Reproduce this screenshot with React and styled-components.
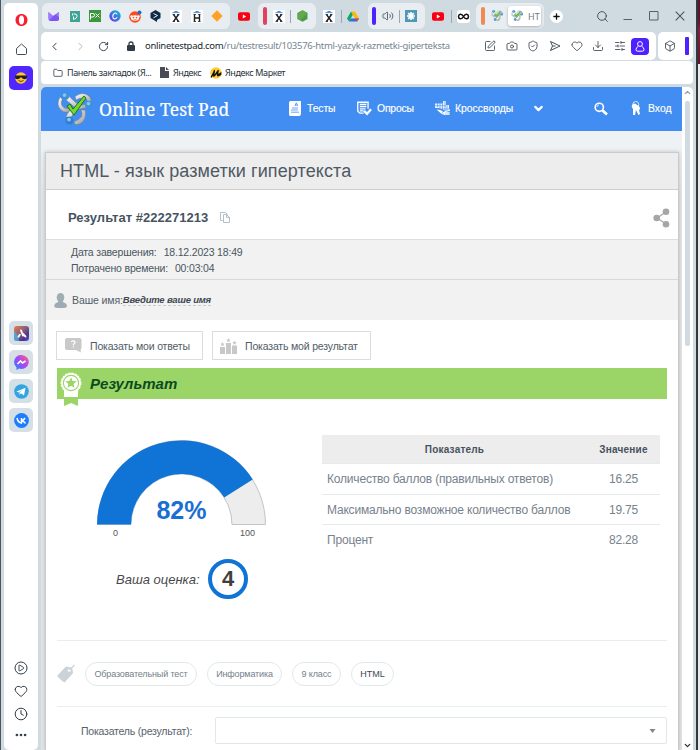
import React from "react";
import styled, { createGlobalStyle } from "styled-components";
import {
  ChevronLeft, ChevronRight, ChevronDown, ChevronUp, RotateCw, Search, SquarePen, Camera,
  ShieldCheck, SendHorizontal, Heart, Download, SlidersHorizontal, Box, Folder, Clock,
  Ellipsis, Volume2, Plus,
} from "lucide-react";

const Global = createGlobalStyle`
  *{box-sizing:border-box}
  body{margin:0;overflow:hidden;background:#cfdae1}
  svg{display:block;flex:none}
`;

const Window = styled.div`
  width:700px;height:750px;display:grid;grid-template-columns:41px 652px 5px 2px;overflow:hidden;
  background:#cfdae1;font-family:"Liberation Sans",Arial,sans-serif;color:#4b5660;
`;
const LeftEdge = styled.div`
  display:flex;height:750px;padding:3px 0 0 3px;border-left:1px solid #50555a;
`;
const Sidebar = styled.aside`
  width:34px;height:747px;background:#fff;border-radius:5px;display:flex;flex-direction:column;align-items:center;
  color:#313c46;
`;
const SideItem = styled.div`
  width:24px;height:24px;margin-top:${p => p.$top || 0}px;border-radius:5px;flex:none;
  display:flex;align-items:center;justify-content:center;background:${p => p.$bg || "transparent"};
`;
const Main = styled.div`height:750px;display:flex;flex-direction:column;min-width:0;`;
const RightFrame = styled.div`border-right:2px solid #33383d;height:750px;`;
const Backdrop = styled.div`height:750px;background:linear-gradient(#5b1428 0 20px,#85213d 30px,#5b1830 64px,#e8e8e8 64px);`;

const TabBar = styled.div`height:32px;display:flex;align-items:flex-start;padding:3px 0 0 1px;flex:none;`;
const TabGroup = styled.div`
  height:26px;width:${p => p.$w}px;padding-left:${p => p.$pl || 0}px;
  border-radius:6px;background:#e7edf1;display:flex;align-items:center;flex:none;
`;
const Tab = styled.div`
  width:${p => p.$w || 20.35}px;height:26px;display:flex;align-items:center;justify-content:center;flex:none;color:#3f4b55;
`;
const TabMark = styled.i`width:4px;height:18px;border-radius:2px;background:${p => p.$c};flex:none;`;
const TabRule = styled.i`width:1px;height:13px;background:#9ba7af;flex:none;`;
const LooseTabs = styled.div`width:${p => p.$w}px;height:26px;display:flex;align-items:center;flex:none;`;
const ActiveTab = styled.div`
  width:33px;height:20px;background:#fff;border-radius:3px;box-shadow:0 1px 3px #0004;display:flex;align-items:center;
  padding-left:3px;gap:5px;font:9px "Noto Sans",sans-serif;color:#70787e;overflow:hidden;white-space:nowrap;flex:none;
`;
const NewTab = styled.div`width:13px;height:13px;border-radius:50%;background:#fff;color:#111;display:flex;align-items:center;justify-content:center;`;
const WindowControls = styled.div`display:flex;margin-left:21px;`;

const AddressRow = styled.div`height:28px;display:flex;gap:2px;flex:none;`;
const AddressBar = styled.div`
  width:615px;background:#fff;border-radius:5px;display:flex;align-items:center;padding:0 7px 0 6px;color:#303b45;
`;
const NavCluster = styled.div`display:flex;align-items:center;`;
const NavIcon = styled.div`width:${p => p.$w}px;margin-left:${p => p.$ml || 0}px;display:flex;justify-content:center;opacity:${p => p.$dim ? 0.35 : 1};`;
const Url = styled.div`font:9.5px/14px "Noto Sans",sans-serif;letter-spacing:-.29px;color:#20282f;white-space:nowrap;padding-left:5px;
  span{color:#74848f}`;
const Actions = styled.div`display:flex;align-items:center;margin-left:auto;`;
const Account = styled.div`width:18px;height:17px;border-radius:4px;background:#4d22ff;color:#fff;display:flex;align-items:center;justify-content:center;`;
const PanelBar = styled.div`width:35px;background:#fff;border-radius:5px;display:flex;align-items:center;justify-content:space-between;padding:0 4px 0 6px;color:#303b45;`;
const PanelMark = styled.i`width:4px;height:18px;background:#4d22ff;border-radius:1px;`;
const Bookmarks = styled.div`
  height:23px;margin-top:1px;background:#fff;border-radius:4px;display:flex;align-items:center;padding-left:12px;flex:none;
  font:9px "Noto Sans",sans-serif;color:#27313a;
`;
const Bookmark = styled.div`display:flex;align-items:center;gap:${p => p.$gap || 4}px;width:${p => p.$w}px;white-space:nowrap;letter-spacing:-.4px;`;

const Viewport = styled.div`margin-top:3px;height:663px;display:flex;border-radius:5px 5px 0 0;overflow:hidden;flex:none;`;
const Page = styled.div`width:641px;background:linear-gradient(#eef2f4 60px,#e3e5e7 110px);display:flex;flex-direction:column;`;
const Scroller = styled.div`width:11px;background:#fff;display:flex;flex-direction:column;align-items:center;color:#9a9fa3;padding:1px 0 0;justify-content:space-between;`;
const ScrollTop = styled.div`display:flex;flex-direction:column;align-items:center;gap:4px;`;
const Thumb = styled.div`width:5px;height:245px;background:#cfdae2;border-radius:2px;`;

const SiteHeader = styled.header`
  height:43.500px;flex:none;background:#418df2;color:#fff;display:flex;align-items:center;font-size:10.4px;
`;
const Brand = styled.div`
  width:248px;display:flex;align-items:center;gap:6px;padding-left:16px;font:17.5px "Noto Serif","Liberation Serif",serif;white-space:nowrap;
  span{-webkit-text-stroke:.2px #fff;letter-spacing:.06px}
`;
const MenuItem = styled.div`display:flex;align-items:center;gap:${p => p.$gap || 5}px;width:${p => p.$w}px;white-space:nowrap;letter-spacing:${p => p.$ls || 0}px;-webkit-text-stroke:.15px #fff;`;

const Card = styled.main`
  width:634px;margin:21.500px 0 0 4px;border:1px solid #c8cacb;border-bottom:0;background:#fff;flex:1;box-shadow:0 0 4px #0003;
`;
const CardTitle = styled.h1`
  margin:0;height:37px;background:#ededed;border-bottom:1px solid #cfcfcf;padding-left:14px;font-weight:400;font-size:18px;
  line-height:37px;color:#4e5963;letter-spacing:.09px;white-space:nowrap;
`;
const ResultHead = styled.div`height:49px;display:flex;align-items:center;justify-content:space-between;padding:6px 8px 0 22px;font-weight:700;font-size:13px;color:#46545f;`;
const ResultId = styled.div`display:flex;gap:12px;align-items:center;letter-spacing:.02px;`;
const Meta = styled.div`
  height:41px;background:#f2f2f2;border-top:1px solid #dedede;border-bottom:1px solid #d9d9d9;padding:4px 0 0 25px;
  font-size:10.5px;line-height:16px;color:#4a5660;
`;
const MetaRow = styled.div`display:flex;gap:7px;white-space:nowrap;letter-spacing:-.18px;`;
const NameRow = styled.div`
  height:40px;background:#f2f2f2;display:flex;align-items:center;padding-left:8px;font-size:10.5px;color:#505d69;letter-spacing:-.1px;
  svg{margin-right:5px}
`;
const NameLink = styled.b`font-style:italic;font-size:9.5px;border-bottom:1px dashed #ccc;color:#3e4851;line-height:11px;letter-spacing:-.2px;`;
const Body = styled.div`padding:11px 11px 0;`;
const Buttons = styled.div`display:flex;gap:9px;margin-left:-1px;`;
const Button = styled.div`
  width:${p => p.$w}px;height:29px;border:1px solid #dcdcdc;display:flex;align-items:center;gap:${p => p.$gap}px;padding-left:${p => p.$pl}px;font-size:10.5px;
  color:#505c66;white-space:nowrap;letter-spacing:-.17px;
`;
const Banner = styled.div`
  height:31px;margin-top:8px;background:#9bd467;padding-left:3px;display:flex;gap:8px;font:italic 700 15px/31px "Liberation Sans",sans-serif;color:#0b4c20;
  svg{margin-top:4px} span{letter-spacing:.12px}
`;
const Summary = styled.div`height:242px;display:flex;border-bottom:1px solid #e8eded;`;
const ScoreColumn = styled.div`width:265px;padding:41px 0 0 39px;`;
const GaugeText = styled.text`
  font-family:"Liberation Sans",sans-serif;font-size:${p => p.$size}px;font-weight:${p => p.$bold ? 700 : 400};fill:${p => p.$c};text-anchor:middle;
`;
const Grade = styled.div`display:flex;align-items:center;gap:7px;padding-left:20px;margin-top:18px;font-style:italic;font-size:13px;color:#47494b;
  span{white-space:nowrap;width:85px}`;
const GradeBadge = styled.b`width:40px;height:40px;border:4px solid #1074d6;border-radius:50%;display:flex;align-items:center;justify-content:center;font-style:normal;font-size:22px;color:#3f3f3f;`;
const Table = styled.div`width:338px;margin-top:36px;`;
const TableRow = styled.div`
  display:grid;grid-template-columns:265px 73px;align-items:center;height:${p => p.$h}px;
  border-bottom:${p => p.$last ? 0 : "1px solid #e6eaea"};background:${p => p.$head ? "#ededed" : "#fff"};
  font-size:${p => p.$head ? 10 : 12}px;font-weight:${p => p.$head ? 700 : 400};color:${p => p.$head ? "#46525d" : "#77828d"};
  letter-spacing:${p => p.$head ? ".2px" : "-.19px"};
`;
const Cell = styled.div`padding-left:${p => p.$center ? 0 : 5}px;text-align:${p => p.$center ? "center" : "left"};white-space:nowrap;`;
const Tags = styled.div`height:66px;border-bottom:1px solid #e8eded;display:flex;align-items:center;gap:10px;`;
const Tag = styled.div`
  width:${p => p.$w}px;height:24px;border:1px solid #e0eaea;border-radius:12px;display:flex;align-items:center;justify-content:center;
  font-size:9px;color:${p => p.$dark ? "#3e4851" : "#74808a"};white-space:nowrap;letter-spacing:${p => p.$dark ? 0 : -.14}px;
`;
const Filter = styled.div`display:flex;align-items:center;padding:10px 0 0 24px;font-size:10.5px;color:#56626c;
  span{width:134px;white-space:nowrap;letter-spacing:-.21px}`;
const Select = styled.div`width:453px;height:27px;border:1px solid #e1e8ea;border-radius:2px;display:flex;align-items:center;justify-content:flex-end;padding-right:10px;`;

const Minimize = () => <svg width="10" height="12" viewBox="0 0 10 12"><path d="M.5 9.500h8.500" stroke="#56616a" /></svg>;
const Maximize = () => <svg width="10" height="10" viewBox="0 0 10 10"><path d="M.5 .5h8.500v8.500H.5z" fill="none" stroke="#56616a" /></svg>;
const Close = () => <svg width="10" height="10" viewBox="0 0 10 10"><path d="M.7.7l8.600 8.600m0-8.600L.7 9.300" fill="none" stroke="#4a555e" strokeWidth="1.100" /></svg>;
const Opera = () => <svg width="13" height="14" viewBox="0 0 13 14"><path fillRule="evenodd" fill="#ff1b2d" d="M6.5 1C2.900 1 .5 3.600.5 7s2.400 6 6 6 6-2.600 6-6-2.400-6-6-6zm0 1.500c1.700 0 2.600 2 2.600 4.500s-.9 4.500-2.600 4.500S3.900 9.500 3.900 7s.9-4.500 2.600-4.500z" /></svg>;
const Home = () => <svg width="13" height="13" viewBox="0 0 13 13"><path d="M1.500 5.500L6.500 1l5 4.500v5q0 1-1 1h-8q-1 0-1-1z" fill="none" stroke="#434e58" strokeWidth="1" strokeLinejoin="round" /></svg>;
const PlayRing = () => <svg width="14" height="14" viewBox="0 0 14 14"><circle cx="7" cy="7" r="6" fill="none" stroke="#313c46" /><path d="M5 4.700q0-.9.900-.5L9.500 6.400q.7.600 0 1.200L5.900 9.800Q5 10.200 5 9.300z" fill="none" stroke="#313c46" strokeWidth=".9" /></svg>;
const Profile = () => <svg width="12" height="13" viewBox="0 0 12 13"><circle cx="6" cy="4" r="2.400" fill="none" stroke="#fff" /><path d="M4.300 6.200Q2 7.500 2 9.700q0 1.500 1.500 1.500h5q1.500 0 1.500-1.500 0-2.200-2.300-3.500" fill="none" stroke="#fff" /></svg>;
const Cool = () => <svg width="14" height="14" viewBox="0 0 14 14"><circle cx="7" cy="7" r="5.800" fill="#ffc72c" /><path d="M1 4.500h12v2c0 2-4.300 2.500-5.300 0H6.300C5.300 9 1 8.500 1 6.500z" fill="#1e1d2b" /><path d="M4.500 9.500q2.500 2 5 0" stroke="#6b3d00" fill="none" /></svg>;
const Mask = () => <svg width="12" height="11" viewBox="0 0 12 11"><path d="M.5 1l4.500 4L11 1v8q-1 1-2 1H2.500Q.5 10 .5 8z" fill="#7b56f0" /><path d="M.5 1L5 5l-3 4-1.500-2zM11 1v5L8 4z" fill="#a079ff" /></svg>;
const Teal = () => <svg width="10" height="11" viewBox="0 0 10 11"><path d="M0 0h10v11H0z" fill="#3fa592" /><path d="M3.500 3h1.500q2.500.3 2 2.500T4.500 8H3.500M2.500 2.500v2M3.500 5.500V8.500" stroke="#fff" fill="none" /></svg>;
const Px = () => <svg width="12" height="12" viewBox="0 0 12 12"><path d="M0 0h12v12H0z" fill="#3b963e" /><path d="M1.500 9.500V3.500H4q1.500 0 1.500 1.700T4 7H2M6.500 3.500l4 4m0-4l-4 4" stroke="#fff" fill="none" /></svg>;
const Canva = () => <svg width="12" height="12" viewBox="0 0 12 12"><defs><linearGradient id="cv" x1="0" x2="1" y1="1" y2="0"><stop stopColor="#6a2ee8" /><stop offset=".5" stopColor="#3b78e8" /><stop offset="1" stopColor="#00c4cc" /></linearGradient></defs><circle cx="6" cy="6" r="5.700" fill="url(#cv)" /><path d="M8 4.300Q7.700 2.800 6.300 3 4 3.500 3.800 6.300 3.900 9 5.900 8.900 7.300 8.700 8.200 7.300" fill="none" stroke="#fff" strokeWidth="1.100" /></svg>;
const Reddit = () => <svg width="13" height="13" viewBox="0 0 13 13"><circle cx="6" cy="7" r="5.800" fill="#ff4a1c" /><ellipse cx="6" cy="8" rx="4" ry="2.800" fill="#fff" /><circle cx="2.500" cy="6.500" r="1.200" fill="#fff" /><circle cx="9.500" cy="6.500" r="1.200" fill="#fff" /><circle cx="4.500" cy="7.600" r=".8" fill="#ff4a1c" /><circle cx="7.500" cy="7.600" r=".8" fill="#ff4a1c" /><path d="M4.500 9.400q1.500.9 3 0" stroke="#d33" strokeWidth=".6" fill="none" /><circle cx="10.500" cy="2.500" r="2" fill="#1b6fc4" /></svg>;
const DeepL = () => <svg width="11" height="12" viewBox="0 0 11 12"><path d="M5.500 0L10.500 3v5L7 10v2l-2-1.200L.5 8V3z" fill="#0f2b46" /><path d="M3.500 3.500l4 2-4 2.300" stroke="#fff" fill="none" strokeWidth=".9" /></svg>;
const Crest = ({ h }) => <svg width="12" height="13" viewBox="0 0 12 13"><path d="M0 0h12v13H0z" fill="#fff" /><path d="M3.500 2.300Q6-.5 8.500 2.300z" fill="#2f83e4" /><path d="M2.500 2.600h7" stroke="#317bd2" strokeWidth=".8" />{h ? <path d="M3.500 4.500v7m5-7v7M3.500 8h5" stroke="#222" strokeWidth="1.400" fill="none" /> : <path d="M3.500 4.500l5 7m0-7l-5 7" stroke="#222" strokeWidth="1.400" fill="none" />}<path d="M2.500 4.500H5m2 0h2.500m-7 7H5m2 0h2.500" stroke="#222" strokeWidth=".8" /></svg>;
const Diamond = () => <svg width="12" height="12" viewBox="0 0 12 12"><path d="M6 .3L11.700 6 6 11.700.3 6z" fill="#ffa226" /></svg>;
const Tube = () => <svg width="12" height="9" viewBox="0 0 12 9"><rect width="12" height="8.500" y=".2" rx="2" fill="#f80012" /><path d="M4.800 2.500v4L8.200 4.500z" fill="#fff" /></svg>;
const Node = () => <svg width="11" height="12" viewBox="0 0 11 12"><path d="M5.500.3l5 2.800v5.800l-5 2.800-5-2.800V3.100z" fill="#4b9a48" /><path d="M5.500.3l5 2.800L3 10.300.5 8.900V3.100z" fill="#62a94e" /></svg>;
const Drive = () => <svg width="12" height="11" viewBox="0 0 12 11"><path d="M4 .5L0 7.500l2 3 4-7z" fill="#0da960" /><path d="M4 .5h4l4 7H8z" fill="#ffba00" /><path d="M2 10.500h8l2-3H3.800z" fill="#2d6fdd" /><path d="M8 7.500h4l-2 3z" fill="#e94235" /></svg>;
const Burst = () => <svg width="12" height="12" viewBox="0 0 12 12"><path d="M0 0h12v12H0z" fill="#4f99b5" /><path d="M6 2v8M2 6h8M3.200 3.200l5.600 5.600M8.800 3.200L3.200 8.800" stroke="#fff" strokeWidth="1.700" /></svg>;
const Loop = () => <svg width="13" height="13" viewBox="0 0 13 13"><rect width="13" height="13" rx="3" fill="#fff" /><path d="M6.500 6.500C4.500 3 1.500 4 1.500 6.500s3 3.500 5 0 5-2.500 5 0-3 3.500-5 0z" stroke="#111" strokeWidth="1.500" fill="none" /></svg>;
const Logo = ({ s = 12 }) => (
  <svg width={s} height={s * .92} viewBox="0 0 36 33">
    <defs><linearGradient id="metal" x1="0" x2="1" y1="0" y2="1"><stop stopColor="#fff" /><stop offset="1" stopColor="#9aa0a5" /></linearGradient></defs>
    <g fill="url(#metal)" stroke="#737c83" strokeWidth=".5">
      <path d="M3 5Q-1.500 13 4 18q5 4 9 1l-1-2.500q-5 .5-7-3Q3.500 10 5.500 7z" /><path d="M18 4.500Q26-1.500 32 4q3 3 2 7l-3-1q-1-4-5-4-4 0-7 2z" /><path d="M24 18q4 8-7 11.500l1 3q4 .5 7-2 5-5 3-12.500zM9 25q2-6 7-9l3 4q-4 2-5 6z" /><path d="M10 2.500l11 10-3 3L8 7zM31 12l-13 2 1 4 13-3z" />
    </g>
    <circle cx="8" cy="4" r="4" fill="#3d91d9" /><circle cx="32" cy="12.500" r="3.900" fill="#3d91d9" /><circle cx="12.500" cy="28.500" r="4" fill="#2f80c9" />
    <circle cx="7.500" cy="3" r="1.900" fill="#85c5f0" /><circle cx="31.500" cy="11.500" r="1.900" fill="#85c5f0" /><circle cx="12" cy="27.500" r="1.900" fill="#85c5f0" />
    <path d="M10 14l3-2 3 5 11-13 2 2-12 17z" fill="#70dc29" stroke="#286c16" strokeWidth="1" />
  </svg>
);
const Paper = () => <svg width="9" height="11" viewBox="0 0 9 11"><path d="M0 0h5v4h4v7H0z" fill="#474d52" /><path d="M6 0l3 3H6z" fill="#474d52" /></svg>;
const Market = () => <svg width="12" height="12" viewBox="0 0 12 12"><circle cx="6" cy="6" r="5.800" fill="#fc3" /><path d="M.5 10Q2 8 4 3q1-1 1 1L4.500 7.500 7.800 3q1-1 1 .7L8.300 7l3-2v3L8 9.500Q6.500 9.500 7 7L4.500 9.500q-1.500 1-1.500-1L1.500 11z" fill="#111" /></svg>;
const LockFill = () => <svg width="8" height="10" viewBox="0 0 8 10"><path d="M2 5V3q0-2 2-2t2 2v2" stroke="#303b45" strokeWidth="1.300" fill="none" /><rect y="4" width="8" height="6" rx="1" fill="#303b45" /></svg>;
const Edit = SquarePen;
const Plane = () => <svg width="12" height="12" viewBox="0 0 12 12"><path d="M1.500 1.500L11 6l-9.500 4.500L3.500 6zM3.500 6h3" fill="none" stroke="#303b45" strokeWidth=".9" strokeLinejoin="round" /></svg>;
const TestIcon = () => <svg width="12" height="15" viewBox="0 0 12 15"><path d="M1.500 0H12v12.500q0 2.500-2 2.500H1q-1 0-1-2V2Q0 0 1.500 0z" fill="#fff" /><path d="M5.800 5L7.300 1.800 8.800 5M6.300 4h2M3 7h6M2 9h7M2 11.200h8" stroke="#418df2" strokeWidth=".8" fill="none" /></svg>;
const PollIcon = () => <svg width="15" height="15" viewBox="0 0 16 15"><path d="M7 12.500H3L.8 10.500V.8h11v7M3 3.200h7M3 5.500h7M3 7.800h6M3 10h4" stroke="#fff" strokeWidth="1.400" fill="none" /><path d="M7.500 10l3.200 3.200L15 8.300" stroke="#fff" strokeWidth="2.400" fill="none" /></svg>;
const CrossIcon = () => <svg width="15" height="15" viewBox="0 0 15 15"><path d="M0 2.500h8V0h3v4h3v4h1v2h-4L4 7H0z" fill="#e9f3ff" /><path d="M0 4.700h11M2 8h13M2.500 2v4M5 2v8m2.500-8v8M10 0v10m2-6v6" stroke="#418df2" strokeWidth=".6" /><path d="M1.500 8.500l4 3.500 3 2h6v-3l-4-1-2 1-3-2z" fill="#fff" /><path d="M7 11l2 3m2-3v3m2-3v3" stroke="#418df2" strokeWidth=".5" /></svg>;
const Keys = () => <svg width="11" height="15" viewBox="0 0 11 15"><circle cx="4.800" cy="3.500" r="3" stroke="#d7e7ff" fill="none" /><path d="M1 4q3-3 5 0l2 1q2 3 0 4l1 4-1.500 1L5 9l-1 5H2V8Q0 6 1 4z" fill="#fff" /></svg>;
const Find = () => <svg width="14" height="14" viewBox="0 0 14 14"><circle cx="5.300" cy="5.300" r="4.100" stroke="#fff" strokeWidth="1.600" fill="none" /><path d="M8.500 8.500l4.500 4" stroke="#fff" strokeWidth="2.800" /><path d="M3 5Q3.200 3 5 3" stroke="#fff" strokeWidth=".7" fill="none" /></svg>;
const Copy = () => <svg width="10" height="11" viewBox="0 0 10 11"><path d="M2.500 8.500h-2v-8h5l2 2M3.500 2.500h3l3 3v5h-6zM6.500 2.500v3h3" stroke="#a8bac3" strokeWidth=".9" fill="#fff" /></svg>;
const Share = () => <svg width="17" height="20" viewBox="0 0 17 20"><path d="M13 4L4 10l9 6" stroke="#aaa" strokeWidth="1.300" fill="none" /><circle cx="13" cy="3.700" r="3.300" fill="#a6a6a6" /><circle cx="3.700" cy="10" r="3.300" fill="#a6a6a6" /><circle cx="13" cy="16.300" r="3.300" fill="#a6a6a6" /></svg>;
const Person = () => <svg width="13" height="15" viewBox="0 0 13 15"><ellipse cx="6.500" cy="4.500" rx="3.800" ry="4.500" fill="#a0adb5" /><path d="M4.500 8h4q.3 1.500 2.500 2 2 .5 2 3.500-.5 1.500-6.500 1.500T.3 13.500Q0 10.500 2 10q2.300-.5 2.500-2z" fill="#9eabb4" /></svg>;
const Bubble = () => <svg width="17" height="15" viewBox="0 0 17 15"><path d="M2 0h12.500q2 0 2 2v7.500q0 2-1 2L16 14.500l-5-2.500H2q-2 0-2-2V2Q0 0 2 0z" fill="#c9c9c9" /><path d="M6.400 4.200q.4-1.500 2-1.400 2 .2 1.500 2-.4.800-1.500 1.500v1M8.400 8.200v1.400" stroke="#fff" strokeWidth="1.200" fill="none" /></svg>;
const Podium = () => <svg width="17" height="16" viewBox="0 0 17 16"><path d="M0 9h5v7H0zm6-4h5v11H6zm6 2.500h5V16h-5z" fill="#c8c8c8" /><path d="M2.500 4l.7 1.400 1.400.3-1 .9.200 1.500-1.300-.7-1.300.7.200-1.500-1-.9 1.400-.3zM8.500 0l.7 1.400 1.400.3-1 .9.200 1.500-1.300-.7-1.300.7.200-1.500-1-.9 1.400-.3zM14.500 2.500l.7 1.400 1.400.3-1 .9.200 1.500-1.300-.7-1.300.7.200-1.500-1-.9 1.400-.3z" fill="#c8c8c8" /></svg>;
const Medal = () => (
  <svg width="22" height="34" viewBox="0 0 22 34"><path d="M4 27h14v7l-7-3-7 3z" fill="#9bd467" /><path d="M4 18h14v7H4z" fill="#fff" />
    <circle cx="11" cy="11" r="9.500" fill="#fff" stroke="#fff" strokeWidth="1.800" strokeDasharray="2.500 .7" /><circle cx="11" cy="11" r="7.600" stroke="#9bd467" fill="none" strokeWidth="1.100" />
    <path d="M11 5.300l1.600 3.600 4 .4-3 2.600.9 3.900-3.500-2-3.500 2 .9-3.900-3-2.600 4-.4z" fill="#9bd467" /></svg>
);
const TagIcon = () => <svg width="18" height="20" viewBox="0 0 19 20"><path d="M0 12L9.500 2 16 3.500 17 9 8 19l-3-2-2-2z" fill="#cbd3da" /><circle cx="13" cy="6" r="1.600" fill="#fff" /><path d="M13 6l5.500-5.500" stroke="#cbd3da" strokeWidth="1.300" /></svg>;
const Gauge = () => (
  <svg width="171" height="101" viewBox="0 0 171 101">
    <path d="M1.500 84.500A84 84 0 0 1 169.500 84.500H136A50.500 50.500 0 0 0 35 84.500z" fill="#ededed" stroke="#c4c4c4" />
    <path d="M1 84.500A84.500 84.500 0 0 1 156.700 39.500L128.200 57.500A50.500 50.500 0 0 0 35 84.500z" fill="#1074d6" />
    <GaugeText x="85.500" y="78.500" $size="25" $bold $c="#1a6fd2">82%</GaugeText>
    <GaugeText x="19.500" y="96" $size="9" $c="#555">0</GaugeText>
    <GaugeText x="151.500" y="96" $size="9" $c="#555">100</GaugeText>
  </svg>
);
const Aria = () => <svg width="15" height="15" viewBox="0 0 15 15"><defs><linearGradient id="ar" x1="0" y1="0" x2="1" y2="1"><stop stopColor="#f07a4c" /><stop offset=".45" stopColor="#8a6078" /><stop offset=".75" stopColor="#4a3290" /><stop offset="1" stopColor="#5b4bf0" /></linearGradient></defs><rect width="15" height="15" rx="3" fill="url(#ar)" /><path d="M0 5q4 3 5 10H3q-3 0-3-3z" fill="#49b2e7" opacity=".8" /><path d="M4.500 10.800l1.300-2M7 4.500L9 9.500M9 8l2.500 2.500" stroke="#fff" strokeWidth="1.900" fill="none" strokeLinecap="round" /></svg>;
const Messenger = () => <svg width="15" height="15" viewBox="0 0 15 15"><defs><linearGradient id="ms" x1="0" y1="1" x2="1" y2="0"><stop stopColor="#168cff" /><stop offset=".5" stopColor="#a646fa" /><stop offset="1" stopColor="#ff6675" /></linearGradient></defs><path d="M7.500 0a7.300 7 0 1 1-2.500 13.600L2.500 15v-2.800A7 7 0 0 1 7.500 0z" fill="url(#ms)" /><path d="M3.500 9l3-3 2 2 3-2" stroke="#fff" strokeWidth="1.600" fill="none" /></svg>;
const Telegram = () => <svg width="15" height="15" viewBox="0 0 15 15"><circle cx="7.500" cy="7.500" r="7.300" fill="#32a5de" /><path d="M2.500 7.500l9-3.700L10 11.500 7 9.300l-1.500 1.500V8.500L9 5.500l-4.500 3z" fill="#fff" /></svg>;
const Vk = () => <svg width="15" height="15" viewBox="0 0 15 15"><circle cx="7.500" cy="7.500" r="7.400" fill="#1d7cff" /><path d="M3 5q.8 4.500 4.500 5V5m0 3q2-.5 3.500-3m-3 3q2.500.4 3.500 2.500" stroke="#fff" strokeWidth="1.500" fill="none" /></svg>;

const rows = [["Количество баллов (правильных ответов)", "16.25", 31], ["Максимально возможное количество баллов", "19.75", 30], ["Процент", "82.28", 30]];
const actions = [Edit, Camera, ShieldCheck, Plane, Heart, Download, SlidersHorizontal];

export default function App() {
  return (
    <Window>
      <Global />
      <LeftEdge>
        <Sidebar>
          <SideItem $top={5}><Opera /></SideItem>
          <SideItem $top={5}><Home /></SideItem>
          <SideItem $top={5} $bg="#5028ff"><Cool /></SideItem>
          <SideItem $top={231} $bg="#d5e0e6"><Aria /></SideItem>
          <SideItem $top={5} $bg="#d5e0e6"><Messenger /></SideItem>
          <SideItem $top={5} $bg="#d5e0e6"><Telegram /></SideItem>
          <SideItem $top={5} $bg="#d5e0e6"><Vk /></SideItem>
          <SideItem $top={224}><PlayRing /></SideItem>
          <SideItem $top={-1}><Heart size={14} strokeWidth={1.7} /></SideItem>
          <SideItem $top={-1}><Clock size={14} strokeWidth={1.7} /></SideItem>
          <SideItem $top={-3}><Ellipsis size={14} strokeWidth={2.6} /></SideItem>
        </Sidebar>
      </LeftEdge>
      <Main>
        <TabBar>
          <TabGroup $w={188} $pl={2}>
            <Tab><Mask /></Tab><Tab><Teal /></Tab><Tab><Px /></Tab><Tab><Canva /></Tab><Tab><Reddit /></Tab><Tab><DeepL /></Tab><Tab><Crest /></Tab><Tab><Crest h /></Tab><Tab><Diamond /></Tab>
          </TabGroup>
          <LooseTabs $w={28}><Tab $w={28}><Tube /></Tab></LooseTabs>
          <TabGroup $w={58} $pl={5}><TabMark $c="#df445d" /><Tab $w={23}><Crest /></Tab><TabRule /><Tab $w={23}><Node /></Tab></TabGroup>
          <LooseTabs $w={52}><Tab $w={25}><Crest /></Tab><TabRule /><Tab $w={22}><Drive /></Tab></LooseTabs>
          <TabGroup $w={57} $pl={4}><TabMark $c="#4c22ff" /><Tab $w={23}><Volume2 size={12} strokeWidth={1.6} /></Tab><TabRule /><Tab $w={22}><Burst /></Tab></TabGroup>
          <LooseTabs $w={51}><Tab $w={26}><Tube /></Tab><TabRule /><Tab $w={22}><Loop /></Tab></LooseTabs>
          <TabGroup $w={68} $pl={5}><TabMark $c="#f18a50" /><Tab $w={23}><Logo s={12} /></Tab><ActiveTab><Logo s={12} />HT</ActiveTab></TabGroup>
          <LooseTabs $w={149}>
            <Tab $w={24}><NewTab><Plus size={9} strokeWidth={3.5} /></NewTab></Tab>
            <WindowControls>
              <Tab $w={26}><Search size={13} strokeWidth={1.7} /></Tab><Tab $w={26}><Minimize /></Tab><Tab $w={26}><Maximize /></Tab><Tab $w={26}><Close /></Tab>
            </WindowControls>
          </LooseTabs>
        </TabBar>
        <AddressRow>
          <AddressBar>
            <NavCluster>
              <NavIcon $w={14}><ChevronLeft size={13} strokeWidth={1.8} /></NavIcon><NavIcon $w={39} $dim><ChevronRight size={13} strokeWidth={1.8} /></NavIcon>
              <NavIcon $w={6}><RotateCw size={11} strokeWidth={2} /></NavIcon><NavIcon $w={18} $ml={16}><LockFill /></NavIcon>
            </NavCluster>
            <Url>onlinetestpad.com<span>/ru/testresult/103576-html-yazyk-razmetki-giperteksta</span></Url>
            <Actions>
              {actions.map((Icon, i) => <NavIcon key={i} $w={21.7}><Icon size={12} strokeWidth={1.6} /></NavIcon>)}
              <Account><Profile /></Account>
            </Actions>
          </AddressBar>
          <PanelBar><Box size={12} strokeWidth={1.6} /><PanelMark /></PanelBar>
        </AddressRow>
        <Bookmarks>
          <Bookmark $w={107}><Folder size={10} strokeWidth={1.8} />Панель закладок (Я...</Bookmark>
          <Bookmark $w={50}><Paper />Яндекс</Bookmark><Bookmark $w={90} $gap={3}><Market />Яндекс Маркет</Bookmark>
        </Bookmarks>
        <Viewport>
          <Page>
            <SiteHeader>
              <Brand><Logo s={36} /><span>Online Test Pad</span></Brand>
              <MenuItem $w={68} $gap={6} $ls={-.1}><TestIcon />Тесты</MenuItem><MenuItem $w={78} $ls={-.2}><PollIcon />Опросы</MenuItem><MenuItem $w={97}><CrossIcon />Кроссворды</MenuItem>
              <MenuItem $w={62}><ChevronDown size={13} strokeWidth={4} /></MenuItem><MenuItem $w={37}><Find /></MenuItem><MenuItem $w={50} $gap={6}><Keys />Вход</MenuItem>
            </SiteHeader>
            <Card>
              <CardTitle>HTML - язык разметки гипертекста</CardTitle>
              <ResultHead><ResultId>Результат #222271213<Copy /></ResultId><Share /></ResultHead>
              <Meta><MetaRow><span>Дата завершения:</span><span>18.12.2023 18:49</span></MetaRow><MetaRow><span>Потрачено времени:</span><span>00:03:04</span></MetaRow></Meta>
              <NameRow><Person />Ваше имя:<NameLink>Введите ваше имя</NameLink></NameRow>
              <Body>
                <Buttons><Button $w={147} $pl={8} $gap={8}><Bubble />Показать мои ответы</Button><Button $w={159} $pl={7} $gap={8}><Podium />Показать мой результат</Button></Buttons>
                <Banner><Medal /><span>Результат</span></Banner>
                <Summary>
                  <ScoreColumn><Gauge /><Grade><span>Ваша оценка:</span><GradeBadge>4</GradeBadge></Grade></ScoreColumn>
                  <Table>
                    <TableRow $head $h={29}><Cell $center>Показатель</Cell><Cell $center>Значение</Cell></TableRow>
                    {rows.map(([a, b, h], i) => <TableRow key={a} $h={h} $last={i === 2}><Cell>{a}</Cell><Cell $center>{b}</Cell></TableRow>)}
                  </Table>
                </Summary>
                <Tags><TagIcon /><Tag $w={112}>Образовательный тест</Tag><Tag $w={75}>Информатика</Tag><Tag $w={49}>9 класс</Tag><Tag $w={43} $dark>HTML</Tag></Tags>
                <Filter><span>Показатель (результат):</span><Select><svg width="7" height="4" viewBox="0 0 7 4"><path d="M.5 0h6l-3 4z" fill="#7d898f" /></svg></Select></Filter>
              </Body>
            </Card>
          </Page>
          <Scroller><ScrollTop><ChevronUp size={9} strokeWidth={3.5} /><Thumb /></ScrollTop><ChevronDown size={9} strokeWidth={3.5} color="#333" /></Scroller>
        </Viewport>
      </Main>
      <RightFrame /><Backdrop />
    </Window>
  );
}
